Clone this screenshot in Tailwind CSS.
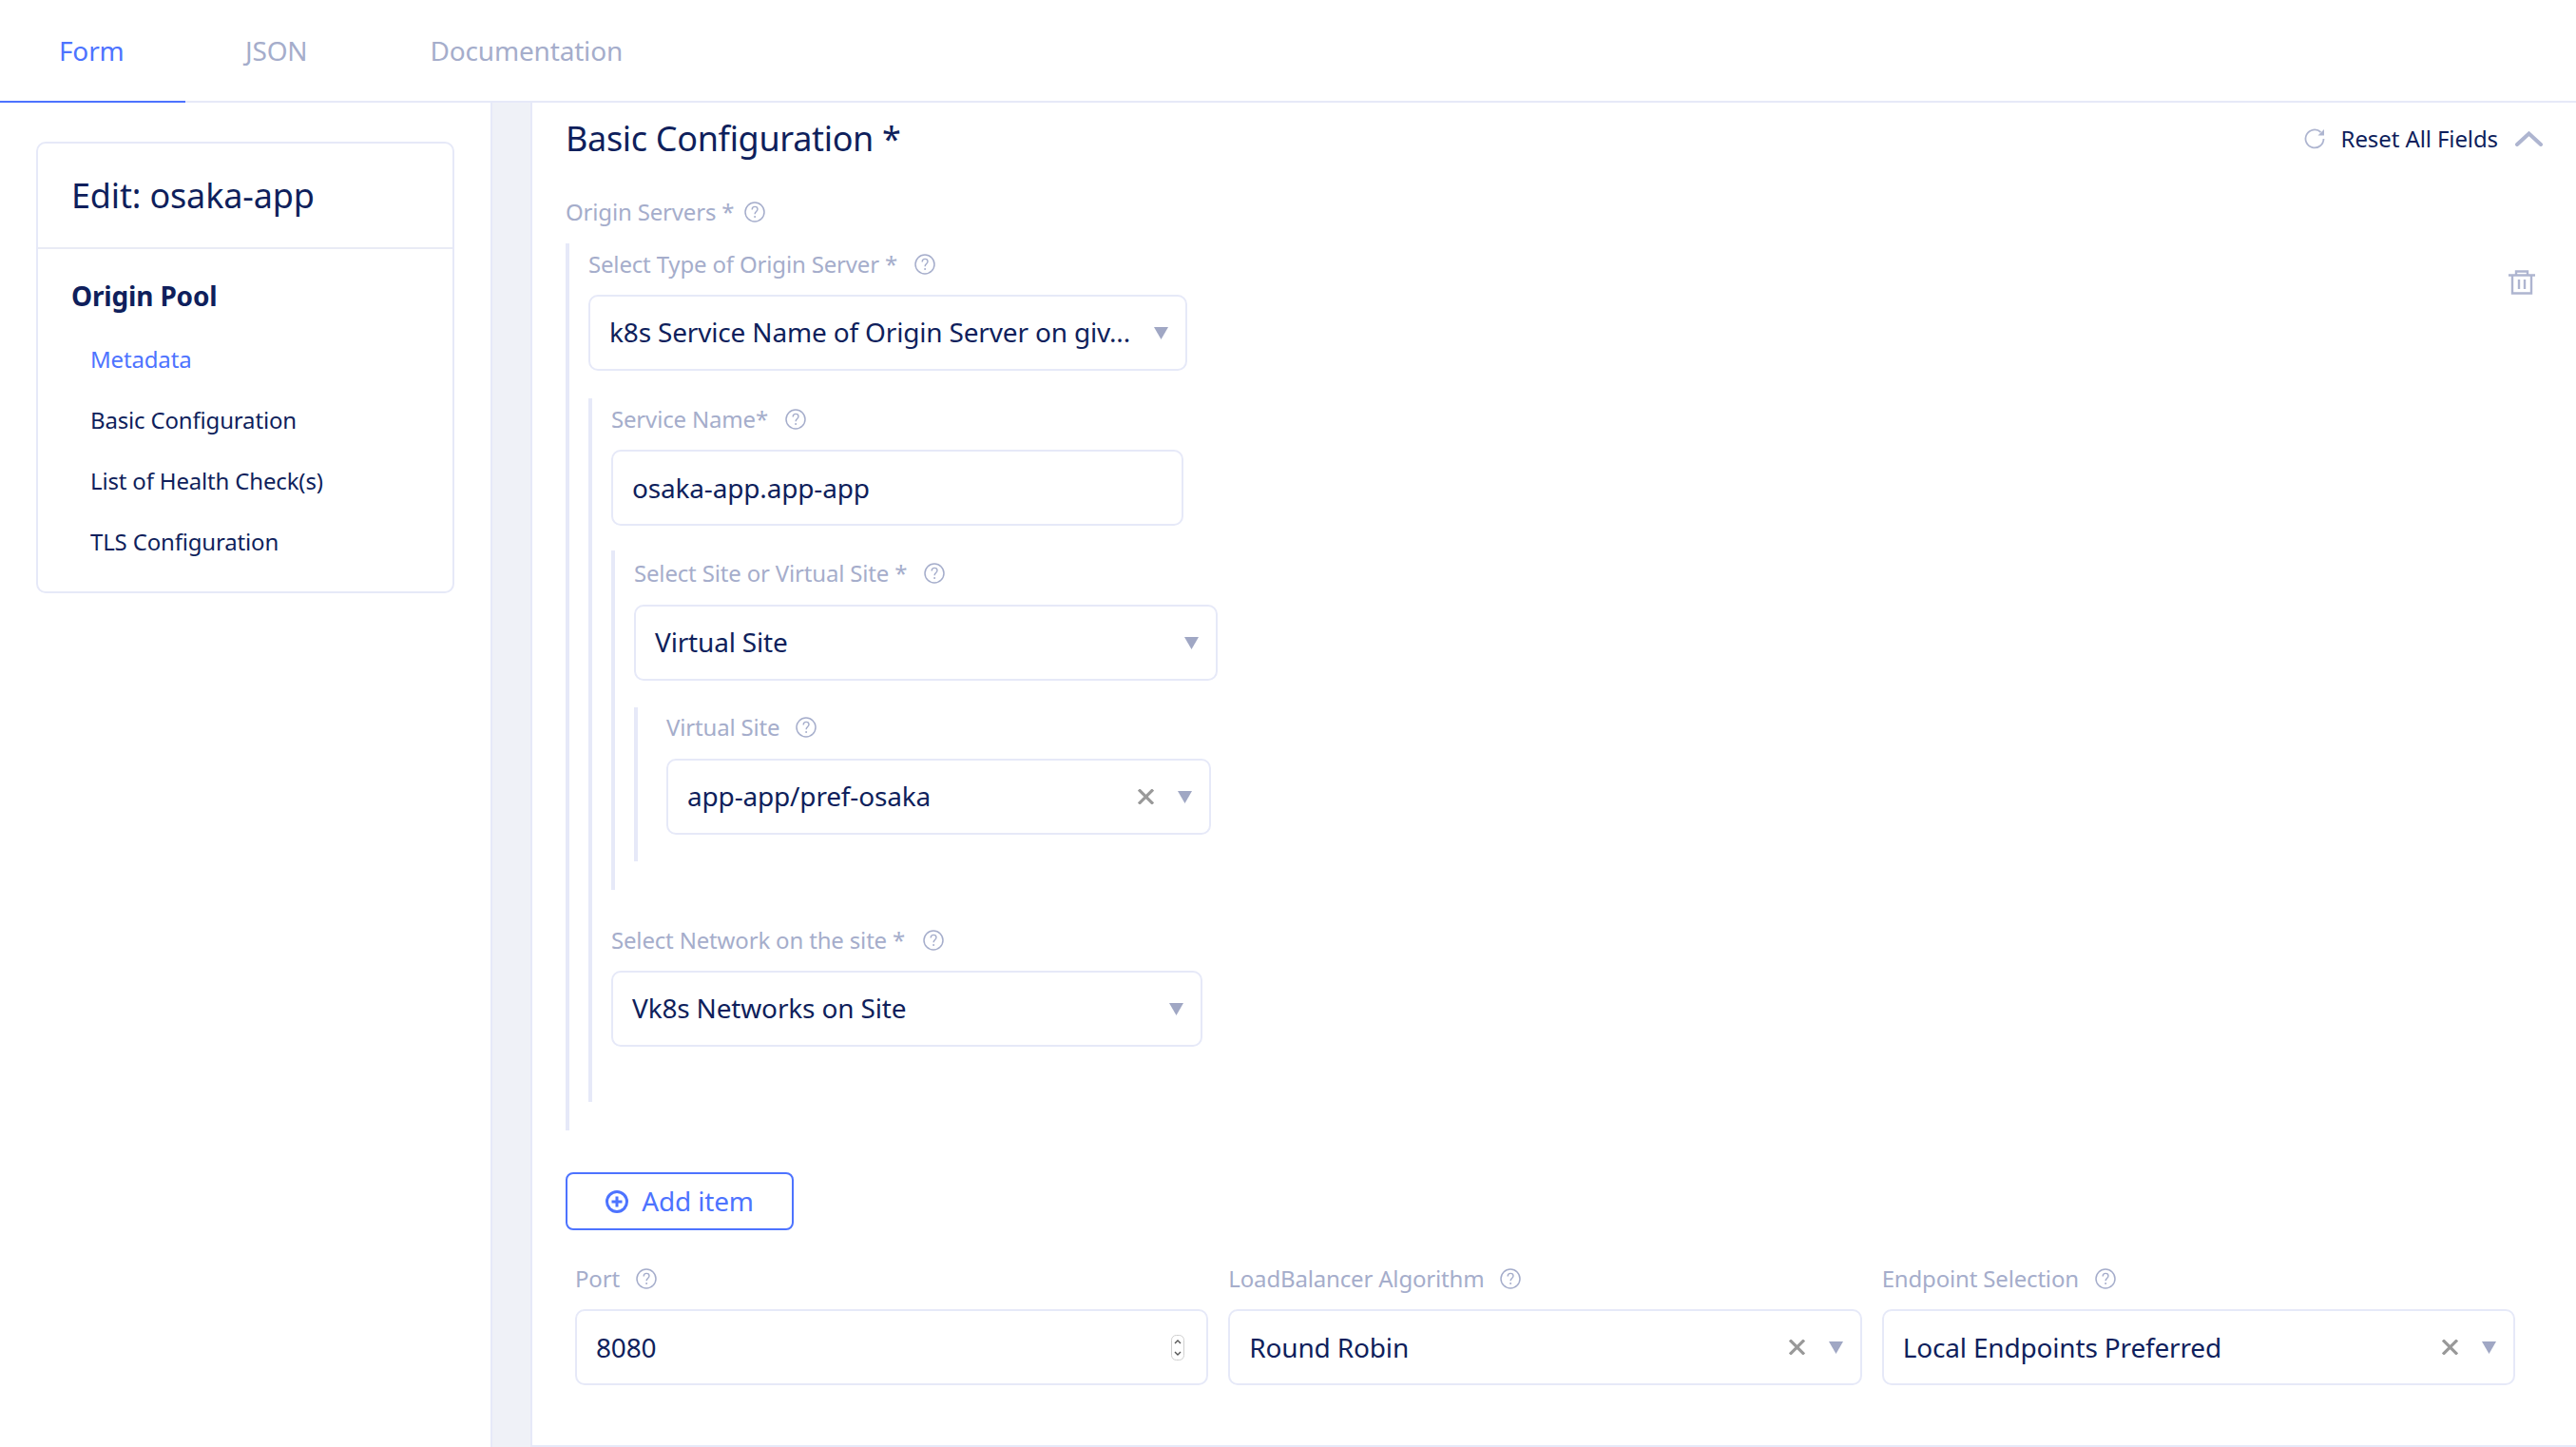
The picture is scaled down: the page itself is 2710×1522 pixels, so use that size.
<!DOCTYPE html>
<html lang="en">
<head>
    <meta charset="UTF-8">
    <title>Edit: osaka-app</title>
    <script src="https://cdn.jsdelivr.net/npm/@tailwindcss/browser@4"></script>
</head>
<body class="bg-white">
<svg class="hidden">
    <symbol id="help" viewBox="0 0 22 22"><circle cx="11" cy="11" r="10" fill="none" stroke="currentColor" stroke-width="1.5"/><path d="M8.2 8.4c0-1.8 1.2-3 2.9-3s2.9 1.1 2.9 2.7c0 2.4-2.9 2.6-2.9 5.2" fill="none" stroke="currentColor" stroke-width="1.4"/><circle cx="11.1" cy="16" r="1" fill="currentColor"/></symbol>
    <symbol id="arrow" viewBox="0 0 15 13"><path d="M0 0h15L7.5 13z" fill="currentColor"/></symbol>
    <symbol id="clear" viewBox="0 0 17 16"><path d="M1 .5l15 15M16 .5l-15 15" fill="none" stroke="currentColor" stroke-width="3.2"/></symbol>
</svg>
<div class="w-[2710px] h-[1522px] flex flex-col overflow-hidden text-[#0f1f5c] tracking-[-0.17px] font-['Noto_Sans',sans-serif]">
    <!-- Tabs -->
    <div class="h-[108px] flex border-b-2 border-[#e6e9f8] text-[28px] text-[#a5adcb]">
        <div class="w-[195px] h-[108px] pl-[62px] flex items-center border-b-2 border-[#4d73ff] text-[#4d73ff]">Form</div>
        <div class="pl-[63px] pr-[129px] flex items-center">JSON</div>
        <div class="flex items-center">Documentation</div>
    </div>

    <div class="flex-1 flex min-h-0">
        <!-- Sidebar -->
        <div class="w-[516px] pl-[38px] pt-[41px]">
            <div class="w-[440px] h-[475px] border-2 border-[#e6e9f8] rounded-[10px]">
                <div class="h-[111px] pl-[35px] flex items-center border-b-2 border-[#e9ebf5] text-[36px]">Edit: osaka-app</div>
                <div class="pl-[35px] pt-[14px] text-[28px] font-bold h-[83px] flex items-center">Origin Pool</div>
                <ul class="pl-[55px] pt-px text-[24px]">
                    <li class="h-[64px] flex items-center text-[#4d73ff]">Metadata</li>
                    <li class="h-[64px] flex items-center">Basic Configuration</li>
                    <li class="h-[64px] flex items-center">List of Health Check(s)</li>
                    <li class="h-[64px] flex items-center">TLS Configuration</li>
                </ul>
            </div>
        </div>
        <div class="w-[44px] bg-[#eff1f7] border-x-2 border-[#e6e9f8]"></div>

        <!-- Main form -->
        <div class="flex-1 pl-[35px] pr-[35px] border-b-2 border-[#e6e9f8]">
            <div class="h-[76px] flex items-center justify-between">
                <div class="text-[36px] tracking-[-0.33px]">Basic Configuration *</div>
                <div class="flex items-center">
                    <svg class="w-[22px] h-[22px] text-[#aeb5d0]" viewBox="0 0 22 22" fill="none" stroke="currentColor" stroke-width="1.8"><path d="M20.5 11a9.5 9.5 0 1 1-3-7"/><path d="M21 1v6.5h-6.5z" fill="currentColor" stroke="none"/></svg>
                    <span class="ml-[17px] text-[24px] tracking-[-0.1px]">Reset All Fields</span>
                    <svg class="ml-[18px] w-[29px] h-[16px] text-[#aeb5d0]" viewBox="0 0 29 16" fill="none" stroke="currentColor" stroke-width="4" stroke-linecap="round"><path d="M2 14L14.5 2.5 27 14"/></svg>
                </div>
            </div>

            <div class="mt-[23px] h-[32px] flex items-center text-[24px] text-[#a5adcb]">Origin Servers *<svg class="ml-[11px] w-[22px] h-[22px]"><use href="#help"/></svg></div>

            <!-- Origin server item -->
            <div class="mt-[17px] flex justify-between border-l-4 border-[#e6e9f8] pl-5 pt-[6px] pb-[30px]">
                <div>
                    <div class="h-[32px] flex items-center text-[24px] text-[#a5adcb]">Select Type of Origin Server *<svg class="ml-[18px] w-[22px] h-[22px]"><use href="#help"/></svg></div>
                    <div class="mt-[16px] w-[630px] h-[80px] pl-[20px] pr-[18px] flex items-center justify-between border-2 border-[#e6e9f8] rounded-[10px] text-[28px]">
                        <span class="whitespace-nowrap pb-[2px]">k8s Service Name of Origin Server on giv...</span>
                        <svg class="w-[15px] h-[13px] text-[#a0a7c4]"><use href="#arrow"/></svg>
                    </div>

                    <div class="mt-[29px] border-l-4 border-[#e6e9f8] pl-5 pt-[6px] pb-[58px]">
                        <div class="h-[32px] flex items-center text-[24px] text-[#a5adcb]">Service Name*<svg class="ml-[18px] w-[22px] h-[22px]"><use href="#help"/></svg></div>
                        <div class="mt-[16px] w-[602px] h-[80px] pl-[20px] flex items-center border-2 border-[#e6e9f8] rounded-[10px] text-[28px]">osaka-app.app-app</div>

                        <div class="mt-[26px] border-l-4 border-[#e6e9f8] pl-5 pt-[8px] pb-[30px]">
                            <div class="h-[32px] flex items-center text-[24px] text-[#a5adcb]">Select Site or Virtual Site *<svg class="ml-[18px] w-[22px] h-[22px]"><use href="#help"/></svg></div>
                            <div class="mt-[17px] w-[614px] h-[80px] pl-[20px] pr-[18px] flex items-center justify-between border-2 border-[#e6e9f8] rounded-[10px] text-[28px]">
                                <span class="pb-[3px]">Virtual Site</span>
                                <svg class="w-[15px] h-[13px] text-[#a0a7c4]"><use href="#arrow"/></svg>
                            </div>

                            <div class="mt-[28px] border-l-4 border-[#e6e9f8] pl-[30px] pt-[5px] pb-[28px]">
                                <div class="h-[32px] flex items-center text-[24px] text-[#a5adcb]">Virtual Site<svg class="ml-[17px] w-[22px] h-[22px]"><use href="#help"/></svg></div>
                                <div class="mt-[17px] w-[573px] h-[80px] pl-[20px] pr-[18px] flex items-center border-2 border-[#e6e9f8] rounded-[10px] text-[28px]">
                                    <span class="flex-1 pb-[2px]">app-app/pref-osaka</span>
                                    <svg class="w-[17px] h-[16px] text-[#999999]"><use href="#clear"/></svg>
                                    <svg class="ml-[25px] w-[15px] h-[13px] text-[#a0a7c4]"><use href="#arrow"/></svg>
                                </div>
                            </div>
                        </div>

                        <div class="mt-[37px] h-[32px] flex items-center text-[24px] text-[#a5adcb]">Select Network on the site *<svg class="ml-[19px] w-[22px] h-[22px]"><use href="#help"/></svg></div>
                        <div class="mt-[16px] w-[622px] h-[80px] pl-[20px] pr-[18px] flex items-center justify-between border-2 border-[#e6e9f8] rounded-[10px] text-[28px]">
                            <span class="pb-[3px]">Vk8s Networks on Site</span>
                            <svg class="w-[15px] h-[13px] text-[#a0a7c4]"><use href="#arrow"/></svg>
                        </div>
                    </div>
                </div>
                <svg class="mt-[22px] mr-2 w-[28px] h-[26px] text-[#aeb5d0]" viewBox="0 0 28 26" fill="none" stroke="currentColor" stroke-width="2.4"><path d="M0 5.5h28M8 5V1.5h12V5M4 5.5V24.5h20V5.5M11 10v10M17 10v10"/></svg>
            </div>

            <button class="mt-[44px] w-[240px] h-[61px] flex items-center justify-center border-2 border-[#4d73ff] rounded-[8px] text-[28px] text-[#4d73ff]">
                <svg class="w-[24px] h-[24px]" viewBox="0 0 24 24" fill="none" stroke="currentColor" stroke-width="3"><circle cx="12" cy="12" r="10.5"/><path d="M12 6.5v11M6.5 12h11"/></svg>
                <span class="ml-[14px] pb-[2px]">Add item</span>
            </button>

            <!-- Bottom row -->
            <div class="mt-[35px] ml-[10px] mr-[29px] grid grid-cols-3 gap-x-[21px]">
                <div>
                    <div class="h-[32px] flex items-center text-[24px] text-[#a5adcb]">Port<svg class="ml-[17px] w-[22px] h-[22px]"><use href="#help"/></svg></div>
                    <div class="mt-[16px] h-[80px] pl-[20px] pr-[23px] flex items-center justify-between border-2 border-[#e6e9f8] rounded-[10px] text-[28px]">
                        <span>8080</span>
                        <svg class="w-[14px] h-[27px] text-[#555555]" viewBox="0 0 14 27" fill="none"><rect x="0.5" y="0.5" width="13" height="26" rx="5" stroke="#cfcfcf"/><path d="M4 9l3-3 3 3M4 18l3 3 3-3" stroke="currentColor" stroke-width="1.4"/></svg>
                    </div>
                </div>
                <div>
                    <div class="h-[32px] flex items-center text-[24px] text-[#a5adcb]">LoadBalancer Algorithm<svg class="ml-[16px] w-[22px] h-[22px]"><use href="#help"/></svg></div>
                    <div class="mt-[16px] h-[80px] pl-[20px] pr-[18px] flex items-center border-2 border-[#e6e9f8] rounded-[10px] text-[28px]">
                        <span class="flex-1">Round Robin</span>
                        <svg class="w-[17px] h-[16px] text-[#999999]"><use href="#clear"/></svg>
                        <svg class="ml-[25px] w-[15px] h-[13px] text-[#a0a7c4]"><use href="#arrow"/></svg>
                    </div>
                </div>
                <div>
                    <div class="h-[32px] flex items-center text-[24px] text-[#a5adcb]">Endpoint Selection<svg class="ml-[17px] w-[22px] h-[22px]"><use href="#help"/></svg></div>
                    <div class="mt-[16px] h-[80px] pl-[20px] pr-[18px] flex items-center border-2 border-[#e6e9f8] rounded-[10px] text-[28px]">
                        <span class="flex-1">Local Endpoints Preferred</span>
                        <svg class="w-[17px] h-[16px] text-[#999999]"><use href="#clear"/></svg>
                        <svg class="ml-[25px] w-[15px] h-[13px] text-[#a0a7c4]"><use href="#arrow"/></svg>
                    </div>
                </div>
            </div>
        </div>
    </div>
</div>
</body>
</html>
